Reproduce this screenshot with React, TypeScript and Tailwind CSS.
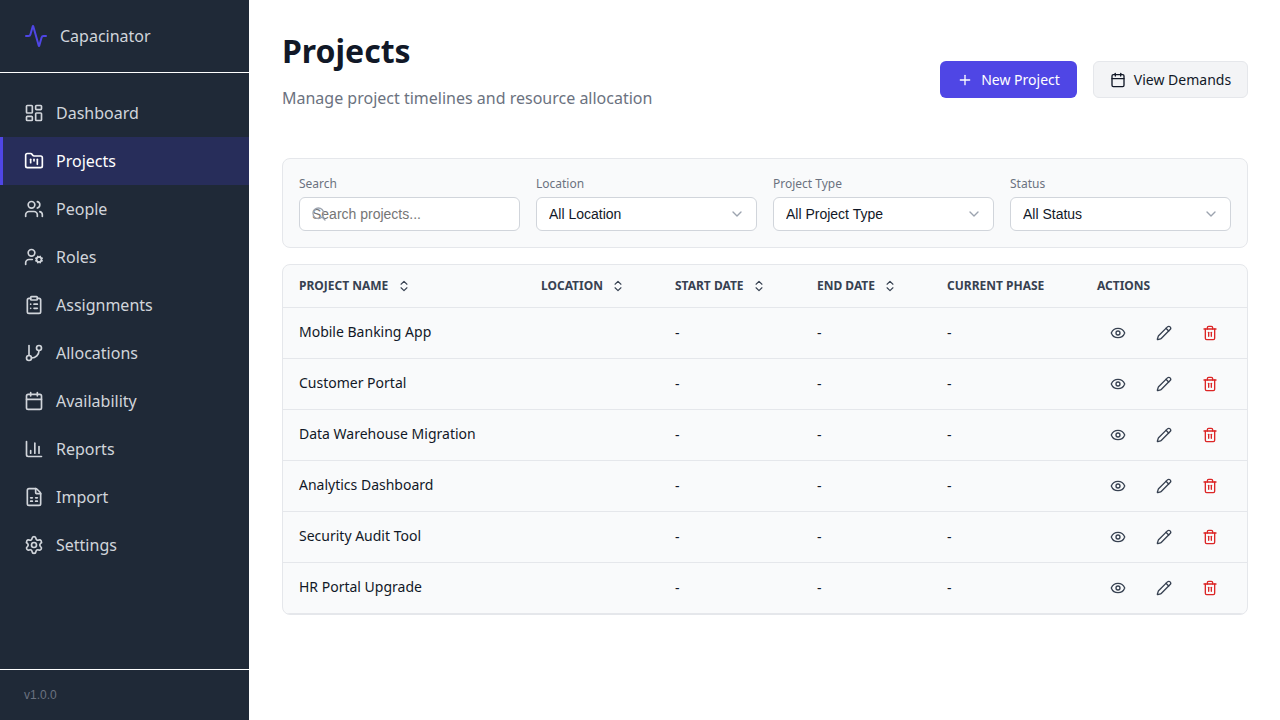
import {
  Activity,
  Calendar,
  ChartColumn,
  ChevronDown,
  ChevronsUpDown,
  ClipboardList,
  Eye,
  FileSpreadsheet,
  FolderKanban,
  GitBranch,
  LayoutDashboard,
  Pencil,
  Plus,
  Search,
  Settings,
  Trash2,
  UserCog,
  Users,
} from "lucide-react";

const navItems = [
  { label: "Dashboard", icon: LayoutDashboard },
  { label: "Projects", icon: FolderKanban, active: true },
  { label: "People", icon: Users },
  { label: "Roles", icon: UserCog },
  { label: "Assignments", icon: ClipboardList },
  { label: "Allocations", icon: GitBranch },
  { label: "Availability", icon: Calendar },
  { label: "Reports", icon: ChartColumn },
  { label: "Import", icon: FileSpreadsheet },
  { label: "Settings", icon: Settings },
];

const projects = [
  "Mobile Banking App",
  "Customer Portal",
  "Data Warehouse Migration",
  "Analytics Dashboard",
  "Security Audit Tool",
  "HR Portal Upgrade",
];

const filters = ["All Location", "All Project Type", "All Status"];
const filterLabels = ["Location", "Project Type", "Status"];

function SortHeader({ label, width, gap }: { label: string; width: string; gap: string }) {
  return (
    <th className={`${width} px-4 py-3 text-left text-xs font-bold uppercase text-[#374151]`}>
      <span className={`flex items-center ${gap}`}>
        {label}
        <ChevronsUpDown size={14} />
      </span>
    </th>
  );
}

export default function App() {
  return (
    <div className="flex h-[720px] w-[1280px] overflow-hidden bg-white font-['Noto_Sans',sans-serif] text-[#111827]">
      <aside className="flex w-[249.4px] shrink-0 flex-col bg-[#1f2937]">
        <div className="flex h-[73px] items-center gap-3 border-b border-white px-6">
          <Activity size={24} className="text-[#4f46e5]" />
          <span className="text-base text-[#d1d5db]">Capacinator</span>
        </div>
        <nav className="flex-1 py-4">
          {navItems.map((item) => {
            const Icon = item.icon;
            return (
              <div
                key={item.label}
                className={
                  item.active
                    ? "flex h-12 items-center gap-3 border-l-[3px] border-[#4f46e5] bg-[#272d5a] pl-[21px] text-white"
                    : "flex h-12 items-center gap-3 border-l-[3px] border-transparent pl-[21px] text-[#d1d5db]"
                }
              >
                <Icon size={20} />
                <span className="text-base">{item.label}</span>
              </div>
            );
          })}
        </nav>
        <div className="flex h-[51px] items-center border-t border-white px-6 text-xs text-[#6b7280]">
          <span className="font-['Liberation_Sans',sans-serif]">v1.0.0</span>
        </div>
      </aside>

      <main className="flex-1 p-8 pl-[32.6px]">
        <div className="flex items-start justify-between">
          <div>
            <h1 className="text-[32px] leading-[38px] font-bold">Projects</h1>
            <p className="mt-4 text-base text-[#6b7280]">
              Manage project timelines and resource allocation
            </p>
          </div>
          <div className="mt-[29px] flex gap-4">
            <button className="flex h-[37px] w-[137px] items-center justify-center gap-2 rounded-md bg-[#4f46e5] text-sm text-white">
              <Plus size={16} />
              New Project
            </button>
            <button className="flex h-[37px] w-[155px] items-center justify-center gap-2 rounded-md border border-[#e5e7eb] bg-[#f3f4f6] text-sm">
              <Calendar size={16} />
              View Demands
            </button>
          </div>
        </div>

        <div className="mt-12 grid h-[90px] grid-cols-4 gap-4 rounded-lg border border-[#e5e7eb] bg-[#f9fafb] px-4 pt-[17px]">
          <div>
            <label className="mb-[5px] block text-xs leading-4 text-[#6b7280]">Search</label>
            <div className="relative">
              <Search size={16} className="absolute top-[9px] left-[12px] text-[#9ca3af]" />
              <input
                placeholder="Search projects..."
                className="h-[34px] w-full rounded-md border border-[#d1d5db] bg-white px-3 font-['Liberation_Sans',sans-serif] text-sm placeholder:text-[#757575]"
              />
            </div>
          </div>
          {filters.map((value, i) => (
            <div key={value}>
              <label className="mb-[5px] block text-xs leading-4 text-[#6b7280]">{filterLabels[i]}</label>
              <div className="relative">
                <select className="h-[34px] w-full appearance-none rounded-md border border-[#d1d5db] bg-white px-3 font-['Liberation_Sans',sans-serif] text-sm text-[#111827]">
                  <option>{value}</option>
                </select>
                <ChevronDown size={16} className="absolute top-[9px] right-[12px] text-[#9ca3af]" />
              </div>
            </div>
          ))}
        </div>

        <div className="mt-4 overflow-hidden rounded-lg border border-[#e5e7eb] bg-[#f9fafb]">
          <table className="w-full table-fixed border-collapse">
            <thead>
              <tr className="h-[42px] border-b border-[#e5e7eb]">
                <SortHeader label="Project Name" width="w-[242px]" gap="gap-[9px]" />
                <SortHeader label="Location" width="w-[134px]" gap="gap-2" />
                <SortHeader label="Start Date" width="w-[142px]" gap="gap-2" />
                <SortHeader label="End Date" width="w-[130px]" gap="gap-2" />
                <th className="w-[150px] px-4 text-left text-xs font-bold uppercase text-[#374151]">Current Phase</th>
                <th className="px-4 text-left text-xs font-bold uppercase text-[#374151]">Actions</th>
              </tr>
            </thead>
            <tbody>
              {projects.map((name) => (
                <tr key={name} className="h-[51px] border-b border-[#e5e7eb] text-sm">
                  <td className="px-4 pb-0.5">{name}</td>
                  <td className="px-4"></td>
                  <td className="px-4">-</td>
                  <td className="px-4">-</td>
                  <td className="px-4">-</td>
                  <td className="px-4">
                    <div className="flex gap-[30px] pl-[13px]">
                      <Eye size={16} className="text-[#374151]" />
                      <Pencil size={16} className="text-[#374151]" />
                      <Trash2 size={16} className="text-[#dc2626]" />
                    </div>
                  </td>
                </tr>
              ))}
            </tbody>
          </table>
        </div>
      </main>
    </div>
  );
}
